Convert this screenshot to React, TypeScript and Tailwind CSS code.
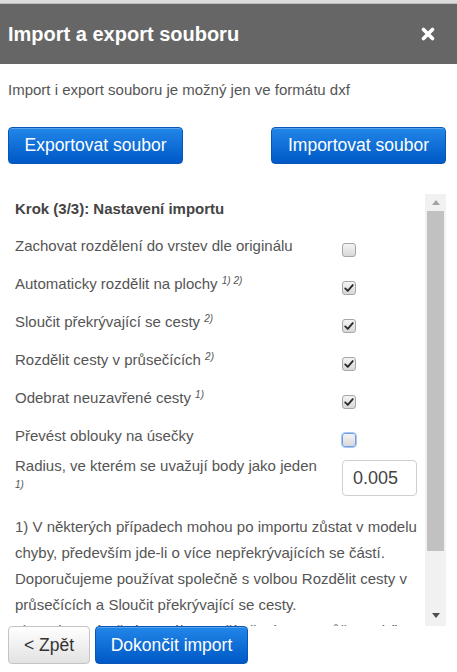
const LABEL = 'text-[15px] leading-[22px] text-[#555]';

type Option = { label: string; notes?: string; checked: boolean; focus?: boolean };

const OPTIONS: Option[] = [
  { label: 'Zachovat rozdělení do vrstev dle originálu', checked: false },
  { label: 'Automaticky rozdělit na plochy', notes: '1) 2)', checked: true },
  { label: 'Sloučit překrývající se cesty', notes: '2)', checked: true },
  { label: 'Rozdělit cesty v průsečících', notes: '2)', checked: true },
  { label: 'Odebrat neuzavřené cesty', notes: '1)', checked: true },
  { label: 'Převést oblouky na úsečky', checked: false, focus: true },
];

function Note({ children }: { children: string }) {
  return <sup className="text-[10px] italic text-[#555]">{children}</sup>;
}

function Checkbox({ checked, focus }: { checked: boolean; focus?: boolean }) {
  return (
    <span
      className={`mt-[7px] flex h-[14px] w-[14px] shrink-0 items-center justify-center rounded-[3px] border bg-gradient-to-b from-[#f4f4f4] to-[#d8d8d8] ${
        focus ? 'border-[#6f9ee8] outline outline-1 outline-[#a9c6f3]' : 'border-[#a6a6a6]'
      }`}
    >
      {checked && (
        <svg viewBox="0 0 12 12" className="h-[10px] w-[10px]">
          <path d="M1.5 6.5 L4.5 9.5 L10.5 2.5" fill="none" stroke="#2a2a2a" strokeWidth="2.2" strokeLinecap="round" strokeLinejoin="round" />
        </svg>
      )}
    </span>
  );
}

const BLUE_BTN =
  'rounded-[4px] border border-[#0a56b8] bg-gradient-to-b from-[#2286e8] to-[#0058c6] text-[17.5px] text-white shadow-[inset_0_1px_0_rgba(255,255,255,0.25)]';

export default function App() {
  return (
    <div className="flex h-[672px] w-[457px] flex-col overflow-hidden bg-white font-['Liberation_Sans',Arial,sans-serif]">
      <div className="h-[4px] border-b border-[#bdbdbd] bg-[#dcdcdc]" />
      <header className="flex h-[60px] items-center justify-between bg-[#666666] pl-2 pr-[22px]">
        <h1 className="text-[20px] font-bold text-white">Import a export souboru</h1>
        <svg viewBox="0 0 14 14" className="h-[14px] w-[14px]">
          <path d="M2.5 2.5 L11.5 11.5 M11.5 2.5 L2.5 11.5" stroke="#fff" strokeWidth="3.6" strokeLinecap="round" />
        </svg>
      </header>

      <p className="mt-[16px] px-2 text-[15px] leading-[20px] text-[#555]">
        Import i export souboru je možný jen ve formátu dxf
      </p>

      <div className="mt-[27px] flex justify-between pl-2 pr-[11px]">
        <button className={`${BLUE_BTN} h-[37px] w-[175px]`}>Exportovat soubor</button>
        <button className={`${BLUE_BTN} h-[37px] w-[175px]`}>Importovat soubor</button>
      </div>

      <div className="ml-2 mr-[11px] mt-[30px] flex h-[432px] shrink-0">
        <div className="min-w-0 flex-1 overflow-hidden pl-[7px] pr-[4px]">
          <div className="flex h-[31px] items-center text-[15px] font-bold text-[#444]">
            Krok (3/3): Nastavení importu
          </div>
          <div className="pt-[2px]">
            {OPTIONS.map((o) => (
              <div key={o.label} className="flex h-[38px] items-center">
                <div className={`w-[327px] shrink-0 ${LABEL}`}>
                  {o.label}
                  {o.notes && <> <Note>{o.notes}</Note></>}
                </div>
                <Checkbox checked={o.checked} focus={o.focus} />
              </div>
            ))}
          </div>
          <div className="flex items-start">
            <div className={`w-[327px] shrink-0 pr-[14px] ${LABEL}`}>
              Radius, ve kterém se uvažují body jako jeden <Note>1)</Note>
            </div>
            <div className="mt-[5px] flex h-[36px] w-[75px] items-center rounded-[4px] border border-[#cfcfcf] px-[10px] text-[18px] text-[#444]">
              0.005
            </div>
          </div>
          <div className="mt-[15px] text-[15px] leading-[26px] text-[#555]">
            <p>
              1) V některých případech mohou po importu zůstat v modelu chyby, především jde-li o více
              nepřekrývajících se částí. Doporučujeme používat společně s volbou Rozdělit cesty v
              průsečících a Sloučit překrývající se cesty.
            </p>
            <p>2) Funkce náročná na výkon počítače, import může probíhat delší dobu.</p>
          </div>
        </div>

        <div className="flex w-[21px] shrink-0 flex-col bg-[#f1f1f1]">
          <div className="flex h-[17px] items-center justify-center">
            <svg viewBox="0 0 8 5" className="h-[5px] w-[8px]">
              <path d="M0 5 L4 0 L8 5 Z" fill="#a3a3a3" />
            </svg>
          </div>
          <div className="mx-[2px] h-[340px] bg-[#c1c1c1]" />
          <div className="flex flex-1 items-end justify-center pb-[8px]">
            <svg viewBox="0 0 8 5" className="h-[5px] w-[8px]">
              <path d="M0 0 L8 0 L4 5 Z" fill="#505050" />
            </svg>
          </div>
        </div>
      </div>

      <div className="flex gap-[5px] px-2">
        <button className="h-[38px] w-[82px] rounded-[4px] border border-[#c4c4c4] bg-gradient-to-b from-[#ffffff] to-[#e2e2e2] text-[17.5px] text-[#333]">
          &lt; Zpět
        </button>
        <button className={`${BLUE_BTN} h-[38px] w-[153px]`}>Dokončit import</button>
      </div>
    </div>
  );
}
